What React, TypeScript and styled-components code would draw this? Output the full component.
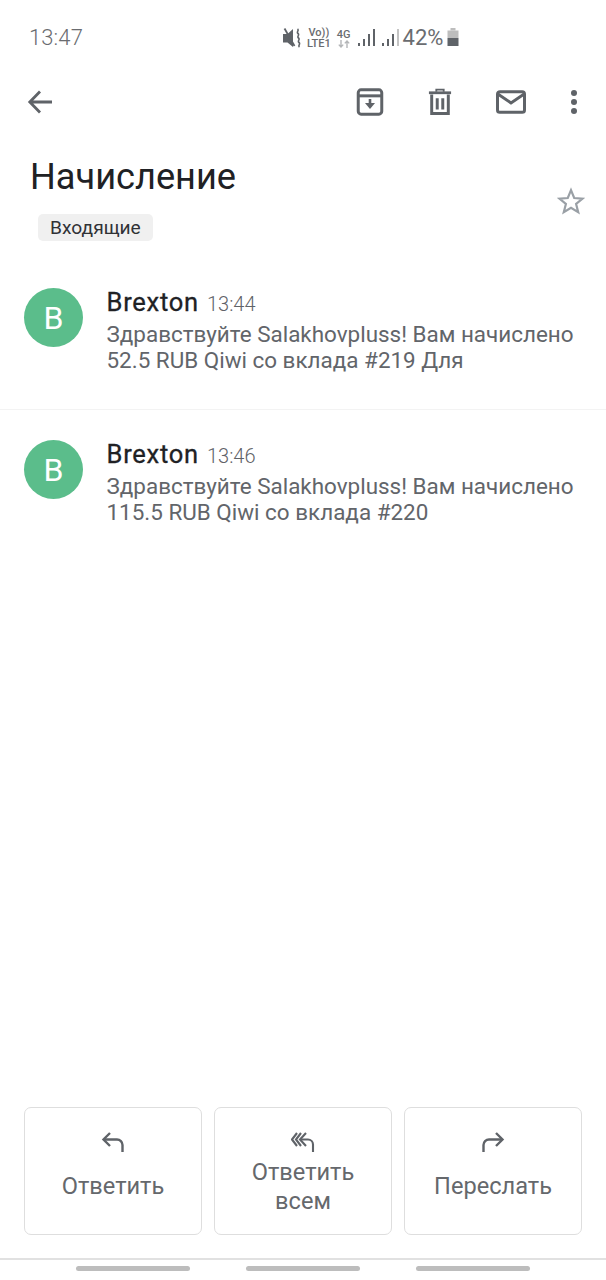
import React from 'react';
import styled, { createGlobalStyle } from 'styled-components';

const GlobalStyle = createGlobalStyle`
  html, body {
    margin: 0;
    padding: 0;
    background: #fff;
    font-family: Roboto, "Noto Sans", sans-serif;
  }
`;

const Screen = styled.div`
  width: 606px;
  height: 1280px;
  display: flex;
  flex-direction: column;
  background: #fff;
  overflow: hidden;
`;

const StatusBar = styled.div`
  height: 76px;
  flex: none;
  display: flex;
  align-items: center;
  padding: 0 0 0 29px;
  color: #6a6c70;
`;

const Clock = styled.span`
  font-size: 22px;
  line-height: 24px;
  width: 254px;
  font-weight: 300;
  letter-spacing: 0.1px;
`;

const StatusIcons = styled.div`
  display: flex;
  align-items: center;
`;

const StatusSpacer = styled.span`
  width: 7px;
`;

const NetLabel = styled.div`
  display: flex;
  flex-direction: column;
  align-items: center;
  font-size: 11px;
  line-height: 11px;
  font-weight: 500;
  color: #6a6c70;
  margin-left: 6px;
`;

const Battery = styled.span`
  font-size: 22px;
  line-height: 24px;
  margin: 0 4px 0 4px;
  color: #6a6c70;
`;

const Toolbar = styled.div`
  height: 52px;
  flex: none;
  display: flex;
  align-items: center;
  padding: 0 28px 0 27px;
  justify-content: space-between;
`;

const ToolActions = styled.div`
  display: flex;
  align-items: center;
  gap: 44px;
`;

const HeaderRow = styled.div`
  display: flex;
  justify-content: space-between;
  padding: 26px 21px 0 30px;
  flex: none;
`;

const Subject = styled.h1`
  margin: 0;
  font-size: 36.2px;
  line-height: 46px;
  font-weight: 400;
  color: #202124;
`;

const Chip = styled.span`
  display: inline-block;
  margin: 14px 0 0 8px;
  padding: 0 12px;
  height: 27px;
  line-height: 27px;
  border-radius: 5px;
  background: #f0f0f0;
  color: #303236;
  font-size: 19.2px;
`;

const StarWrap = styled.div`
  margin-top: 33px;
  line-height: 0;
`;

const MessageRow = styled.div<{ $divided?: boolean }>`
  display: flex;
  gap: 23.5px;
  padding: ${({ $divided }) => ($divided ? '30px 24px 0 24px' : '47px 24px 0 24px')};
  height: ${({ $divided }) => ($divided ? 'auto' : '121px')};
  border-bottom: ${({ $divided }) => ($divided ? 'none' : '1px solid #f3f3f3')};
  flex: none;
`;

const Avatar = styled.div`
  width: 59px;
  height: 59px;
  flex: none;
  border-radius: 50%;
  background: #5bbd8b;
  color: #fff;
  font-size: 32px;
  display: flex;
  align-items: center;
  justify-content: center;
`;

const MessageBody = styled.div`
  flex: 1;
  min-width: 0;
`;

const SenderLine = styled.div`
  display: flex;
  align-items: baseline;
  gap: 8px;
  height: 31px;
  margin-top: -1px;
`;

const Sender = styled.span`
  font-size: 25.5px;
  line-height: 30px;
  font-weight: 400;
  letter-spacing: 0.75px;
  color: #202124;
  -webkit-text-stroke: 0.3px #202124;
`;

const SentAt = styled.span`
  font-size: 20px;
  font-weight: 300;
  color: #5f6368;
`;

const Snippet = styled.div`
  font-size: 22.45px;
  line-height: 26.4px;
  color: #62656a;
  margin-top: 3px;
  white-space: pre-line;
`;

const Spacer = styled.div`
  flex: 1;
`;

const ActionRow = styled.div`
  display: grid;
  grid-template-columns: repeat(3, 178px);
  gap: 12px;
  padding: 0 24px;
  flex: none;
`;

const ActionButton = styled.div`
  height: 128px;
  box-sizing: border-box;
  border: 1.5px solid #dedede;
  border-radius: 7px;
  display: flex;
  flex-direction: column;
  align-items: center;
  padding-top: 22px;
  color: #5f6368;
`;

const ActionLabel = styled.span<{ $tall?: boolean }>`
  font-size: 23.6px;
  line-height: 29px;
  text-align: center;
  color: #65686c;
  margin-top: ${({ $tall }) => ($tall ? '4px' : '18px')};
  width: 120px;
`;

const NavBar = styled.div`
  margin-top: 23px;
  height: 22px;
  flex: none;
  border-top: 2px solid #e1e1e1;
  display: grid;
  grid-template-columns: repeat(3, 114px);
  gap: 56px;
  justify-content: center;
  padding-top: 6px;
  box-sizing: border-box;
`;

const NavPill = styled.div`
  height: 5px;
  background: #bdbdbd;
  border-radius: 3px;
`;

const ICON = '#5f6368';

const BackIcon = () => (
  <svg width="26" height="26" viewBox="0 0 26 26" fill="none" stroke={ICON} strokeWidth="2.8">
    <path d="M25 13H3M13 2.5 2.8 13 13 23.5" />
  </svg>
);

const ArchiveIcon = () => (
  <svg width="28" height="30" viewBox="0 0 30 30" fill="none" stroke={ICON} strokeWidth="3.2">
    <rect x="2.4" y="2" width="25.2" height="26" rx="3" />
    <path d="M2.4 8.4h25.2" />
    <path d="M15 11.8v8" strokeWidth="2.8" />
    <path d="M9.6 16.2h10.8L15 22.6z" fill={ICON} stroke="none" />
  </svg>
);

const TrashIcon = () => (
  <svg width="24" height="30" viewBox="0 0 26 30" fill="none" stroke={ICON} strokeWidth="3.2">
    <path d="M4 7v20.5h18V7" />
    <path d="M1 5h24" strokeWidth="3" />
    <path d="M9 4V1.6h8V4" strokeWidth="2" />
    <path d="M10 11v12M16 11v12" strokeWidth="3.2" />
  </svg>
);

const MailIcon = () => (
  <svg width="30" height="26" viewBox="0 0 32 26" fill="none" stroke={ICON} strokeWidth="3.2">
    <rect x="1.6" y="2" width="28.8" height="22" rx="2.5" />
    <path d="M2 4.5 16 14 30 4.5" />
  </svg>
);

const MoreIcon = () => (
  <svg width="8" height="26" viewBox="0 0 8 26" fill={ICON}>
    <circle cx="4" cy="4" r="3" />
    <circle cx="4" cy="13" r="3" />
    <circle cx="4" cy="22" r="3" />
  </svg>
);

const StarIcon = () => (
  <svg width="28" height="28" viewBox="0 0 28 28" fill="none" stroke="#9aa0a6" strokeWidth="2.2" strokeLinejoin="miter">
    <path d="M14 3.2 17.2 11 25.6 11.6 19.1 17 21.2 25.2 14 20.7 6.8 25.2 8.9 17 2.4 11.6 10.8 11z" />
  </svg>
);

const ReplyIcon = () => (
  <svg width="24" height="24" viewBox="0 0 24 24" fill="none" stroke={ICON} strokeWidth="2.4">
    <path d="M9 3 2.5 9.5 9 16" />
    <path d="M3 9.5h13a5.5 5.5 0 0 1 5.5 5.5v7" />
  </svg>
);

const ReplyAllIcon = () => (
  <svg width="24" height="24" viewBox="0 0 24 24" fill="none" stroke={ICON} strokeWidth="2.1">
    <path d="M6 3 1 9.5 6 16" />
    <path d="M10 3 5 9.5 10 16" />
    <path d="M15 3 9 9.5 15 16" />
    <path d="M9.5 9.5H17a5 5 0 0 1 5 5V22" />
  </svg>
);

const ForwardIcon = () => (
  <svg width="24" height="24" viewBox="0 0 24 24" fill="none" stroke={ICON} strokeWidth="2.4">
    <path d="M15 3 21.5 9.5 15 16" />
    <path d="M21 9.5H8A5.5 5.5 0 0 0 2.5 15v7" />
  </svg>
);

const MuteIcon = () => (
  <svg width="18" height="20" viewBox="0 0 18 20" fill="#5f6368">
    <path d="M0 6h4.5L10 1v18l-5.5-4.5H0z" />
    <path d="M1.5 0.5 11.5 18" stroke="#5f6368" strokeWidth="1.8" />
    <path d="M14.5 1c2 1.5-1.5 3 .5 4.5s-1.5 3 .5 4.5-1.5 3 .5 4.5-1.5 3 .5 4.5" fill="none" stroke="#5f6368" strokeWidth="1.6" />
  </svg>
);

const SignalIcon = ({ dimLast }: { dimLast?: boolean }) => (
  <svg width="17" height="20" viewBox="0 0 17 20">
    <rect x="0" y="15" width="2" height="3" fill="#5f6368" />
    <rect x="5" y="11" width="2" height="7" fill="#5f6368" />
    <rect x="10" y="6" width="2" height="12" fill="#5f6368" />
    <rect x="15" y="1" width="2" height="17" fill={dimLast ? '#c4c4c4' : '#5f6368'} />
  </svg>
);

const TransferIcon = () => (
  <svg width="12" height="8" viewBox="0 0 12 8" fill="none" stroke="#b4b6b8" strokeWidth="1.4">
    <path d="M3 0v7M.8 4.6 3 7l2.2-2.4M9 8V1M6.8 3.4 9 1l2.2 2.4" />
  </svg>
);

const BatteryIcon = () => (
  <svg width="12" height="20" viewBox="0 0 12 20">
    <rect x="3.5" y="0" width="5" height="2.5" fill="#bdbdbd" />
    <rect x="0.5" y="2.5" width="11" height="7.5" fill="#bdbdbd" />
    <rect x="0.5" y="10" width="11" height="8" fill="#5f6368" />
  </svg>
);

const messages = [
  {
    time: '13:44',
    text: 'Здравствуйте Salakhovpluss! Вам начислено\n52.5 RUB Qiwi со вклада #219 Для',
  },
  {
    time: '13:46',
    text: 'Здравствуйте Salakhovpluss! Вам начислено\n115.5 RUB Qiwi со вклада #220',
  },
];

const App: React.FC = () => (
  <Screen>
    <GlobalStyle />
    <StatusBar>
      <Clock>13:47</Clock>
      <StatusIcons>
        <MuteIcon />
        <NetLabel>
          <span>Vo))</span>
          <span>LTE1</span>
        </NetLabel>
        <NetLabel>
          <span>4G</span>
          <TransferIcon />
        </NetLabel>
        <StatusSpacer />
        <SignalIcon />
        <StatusSpacer />
        <SignalIcon dimLast />
        <Battery>42%</Battery>
        <BatteryIcon />
      </StatusIcons>
    </StatusBar>

    <Toolbar>
      <BackIcon />
      <ToolActions>
        <ArchiveIcon />
        <TrashIcon />
        <MailIcon />
        <MoreIcon />
      </ToolActions>
    </Toolbar>

    <HeaderRow>
      <div>
        <Subject>Начисление</Subject>
        <Chip>Входящие</Chip>
      </div>
      <StarWrap>
        <StarIcon />
      </StarWrap>
    </HeaderRow>

    {messages.map((m, i) => (
      <MessageRow key={m.time} $divided={i > 0}>
        <Avatar>B</Avatar>
        <MessageBody>
          <SenderLine>
            <Sender>Brexton</Sender>
            <SentAt>{m.time}</SentAt>
          </SenderLine>
          <Snippet>{m.text}</Snippet>
        </MessageBody>
      </MessageRow>
    ))}

    <Spacer />

    <ActionRow>
      <ActionButton>
        <ReplyIcon />
        <ActionLabel>Ответить</ActionLabel>
      </ActionButton>
      <ActionButton>
        <ReplyAllIcon />
        <ActionLabel $tall>Ответить всем</ActionLabel>
      </ActionButton>
      <ActionButton>
        <ForwardIcon />
        <ActionLabel>Переслать</ActionLabel>
      </ActionButton>
    </ActionRow>

    <NavBar>
      <NavPill />
      <NavPill />
      <NavPill />
    </NavBar>
  </Screen>
);

export default App;
